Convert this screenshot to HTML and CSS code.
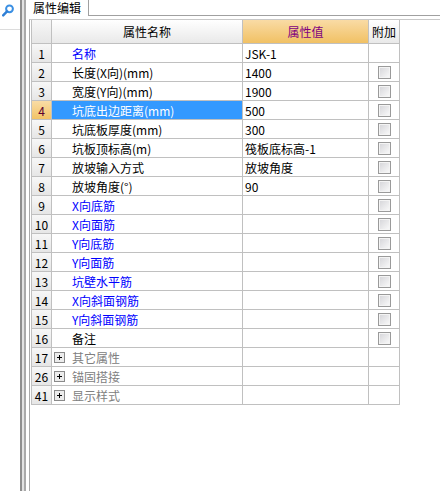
FILE: index.html
```html
<!DOCTYPE html>
<html lang="zh">
<head>
    <meta charset="UTF-8">
    <title>属性编辑</title>
    <link rel="stylesheet" href="styles.css">
</head>
<body>
<div class="app">
    <!-- left search strip -->
    <div class="side">
        <div class="search">
            <svg width="12" height="13" viewBox="0 0 12 13">
                <circle cx="7.5" cy="4.8" r="3.4" fill="none" stroke="#3a8fe3" stroke-width="2"/>
                <line x1="5" y1="7.4" x2="1.2" y2="11.4" stroke="#2f7fd6" stroke-width="2.4" stroke-linecap="round"/>
            </svg>
        </div>
    </div>
    <div class="splitter"></div>

    <div class="main">
        <div class="tabbar">
            <div class="tab">属性编辑</div>
            <div class="tab-rest"></div>
        </div>

        <div class="panel">
            <div class="grid">
                <div class="row head">
                    <div class="cell num"></div>
                    <div class="cell hname">属性名称</div>
                    <div class="cell hval">属性值</div>
                    <div class="cell hext">附加</div>
                </div>

                <div class="row"><div class="cell num">1</div><div class="cell name blue">名称</div><div class="cell val">JSK-1</div><div class="cell ext"></div></div>
                <div class="row"><div class="cell num">2</div><div class="cell name">长度(X向)(mm)</div><div class="cell val">1400</div><div class="cell ext"><span class="chk"></span></div></div>
                <div class="row"><div class="cell num">3</div><div class="cell name">宽度(Y向)(mm)</div><div class="cell val">1900</div><div class="cell ext"><span class="chk"></span></div></div>
                <div class="row"><div class="cell num cur">4</div><div class="cell name sel">坑底出边距离(mm)</div><div class="cell val">500</div><div class="cell ext"><span class="chk"></span></div></div>
                <div class="row"><div class="cell num">5</div><div class="cell name">坑底板厚度(mm)</div><div class="cell val">300</div><div class="cell ext"><span class="chk"></span></div></div>
                <div class="row"><div class="cell num">6</div><div class="cell name">坑板顶标高(m)</div><div class="cell val">筏板底标高-1</div><div class="cell ext"><span class="chk"></span></div></div>
                <div class="row"><div class="cell num">7</div><div class="cell name">放坡输入方式</div><div class="cell val">放坡角度</div><div class="cell ext"><span class="chk"></span></div></div>
                <div class="row"><div class="cell num">8</div><div class="cell name">放坡角度(°)</div><div class="cell val">90</div><div class="cell ext"><span class="chk"></span></div></div>
                <div class="row"><div class="cell num">9</div><div class="cell name blue">X向底筋</div><div class="cell val"></div><div class="cell ext"><span class="chk"></span></div></div>
                <div class="row"><div class="cell num">10</div><div class="cell name blue">X向面筋</div><div class="cell val"></div><div class="cell ext"><span class="chk"></span></div></div>
                <div class="row"><div class="cell num">11</div><div class="cell name blue">Y向底筋</div><div class="cell val"></div><div class="cell ext"><span class="chk"></span></div></div>
                <div class="row"><div class="cell num">12</div><div class="cell name blue">Y向面筋</div><div class="cell val"></div><div class="cell ext"><span class="chk"></span></div></div>
                <div class="row"><div class="cell num">13</div><div class="cell name blue">坑壁水平筋</div><div class="cell val"></div><div class="cell ext"><span class="chk"></span></div></div>
                <div class="row"><div class="cell num">14</div><div class="cell name blue">X向斜面钢筋</div><div class="cell val"></div><div class="cell ext"><span class="chk"></span></div></div>
                <div class="row"><div class="cell num">15</div><div class="cell name blue">Y向斜面钢筋</div><div class="cell val"></div><div class="cell ext"><span class="chk"></span></div></div>
                <div class="row"><div class="cell num">16</div><div class="cell name">备注</div><div class="cell val"></div><div class="cell ext"><span class="chk"></span></div></div>

                <!-- collapsed groups -->
                <div class="row"><div class="cell num">17</div><div class="cell group"><svg class="plus" width="11" height="11" viewBox="0 0 11 11"><rect x="0.5" y="0.5" width="10" height="10" fill="#ececec" stroke="#8a8a8a"/><path d="M3 5.5h5M5.5 3v5" stroke="#000" stroke-width="1"/></svg>其它属性</div><div class="cell val"></div><div class="cell ext"></div></div>
                <div class="row"><div class="cell num">26</div><div class="cell group"><svg class="plus" width="11" height="11" viewBox="0 0 11 11"><rect x="0.5" y="0.5" width="10" height="10" fill="#ececec" stroke="#8a8a8a"/><path d="M3 5.5h5M5.5 3v5" stroke="#000" stroke-width="1"/></svg>锚固搭接</div><div class="cell val"></div><div class="cell ext"></div></div>
                <div class="row"><div class="cell num">41</div><div class="cell group"><svg class="plus" width="11" height="11" viewBox="0 0 11 11"><rect x="0.5" y="0.5" width="10" height="10" fill="#ececec" stroke="#8a8a8a"/><path d="M3 5.5h5M5.5 3v5" stroke="#000" stroke-width="1"/></svg>显示样式</div><div class="cell val"></div><div class="cell ext"></div></div>
            </div>
        </div>
    </div>
</div>
</body>
</html>
```

FILE: styles.css
```css
body {
    margin: 0;
    font-family: "Noto Sans CJK SC", "Noto Sans", sans-serif;
    font-size: 12px;
    color: #000;
    background: #fff;
}
.app {
    display: flex;
    height: 100vh;
}

/* left strip */
.side {
    width: 20px;
}
.search {
    height: 30px;
    box-sizing: border-box;
    padding: 4px 0 0 2px;
    border-bottom: 1px solid #dcdcdc;
}
.search svg { display: block; }
.splitter {
    width: 6px;
    box-sizing: border-box;
    border-left: 2px solid #8e8e8e;
    border-right: 2px solid #a9a9a9;
    background: #e2e2e2;
}

.main {
    flex: 1;
    display: flex;
    flex-direction: column;
}
.tabbar {
    display: flex;
    height: 16px;
}
.tab {
    width: 63px;
    box-sizing: border-box;
    padding-left: 7px;
    border-right: 1px solid #a0a0a0;
    line-height: 15px;
    font-size: 12px;
}
.tab-rest {
    flex: 1;
    border-bottom: 1px solid #a0a0a0;
}
.panel {
    flex: 1;
    margin: 3px 0 0 3px;
    padding-left: 1px;
    border-left: 1px solid #a9a9a9;
    border-top: 1px solid #c8c8c8;
}

/* property grid */
.grid {
    width: 369px;
    border-left: 1px solid #c0c0c0;
}
.row {
    display: grid;
    grid-template-columns: 20px 191px 126px 31px;
    height: 19px;
}
.row.head { height: 24px; }
.cell {
    box-sizing: border-box;
    border-right: 1px solid #c0c0c0;
    border-bottom: 1px solid #c0c0c0;
    display: flex;
    align-items: center;
    white-space: nowrap;
    overflow: hidden;
}
.num {
    justify-content: center;
    background: linear-gradient(#f7f7f7, #e6e6e6);
}
.num.cur {
    background: linear-gradient(#f9dca6, #f2c366);
    color: #5a0030;
}
.hname, .hext {
    justify-content: center;
    background: linear-gradient(#ffffff, #e9e9e9);
}
.hval {
    justify-content: center;
    background: linear-gradient(#f9dba5, #f1c164);
    color: #800080;
}
.name { padding-left: 20px; }
.name.blue { color: #0000ff; }
.name.sel {
    background: #3399ff;
    color: #fff;
}
.group {
    padding-left: 2px;
    color: #808080;
}
.plus {
    margin-right: 7px;
    flex: none;
}
.val { padding-left: 2px; }
.ext { justify-content: center; padding-left: 1px; }
.chk {
    width: 13px;
    height: 13px;
    box-sizing: border-box;
    border: 1px solid #9a9a9a;
    background: linear-gradient(135deg, #d4d4d8, #fbfbfb);
    box-shadow: inset 0 0 0 1px #f4f4f4;
}
```
